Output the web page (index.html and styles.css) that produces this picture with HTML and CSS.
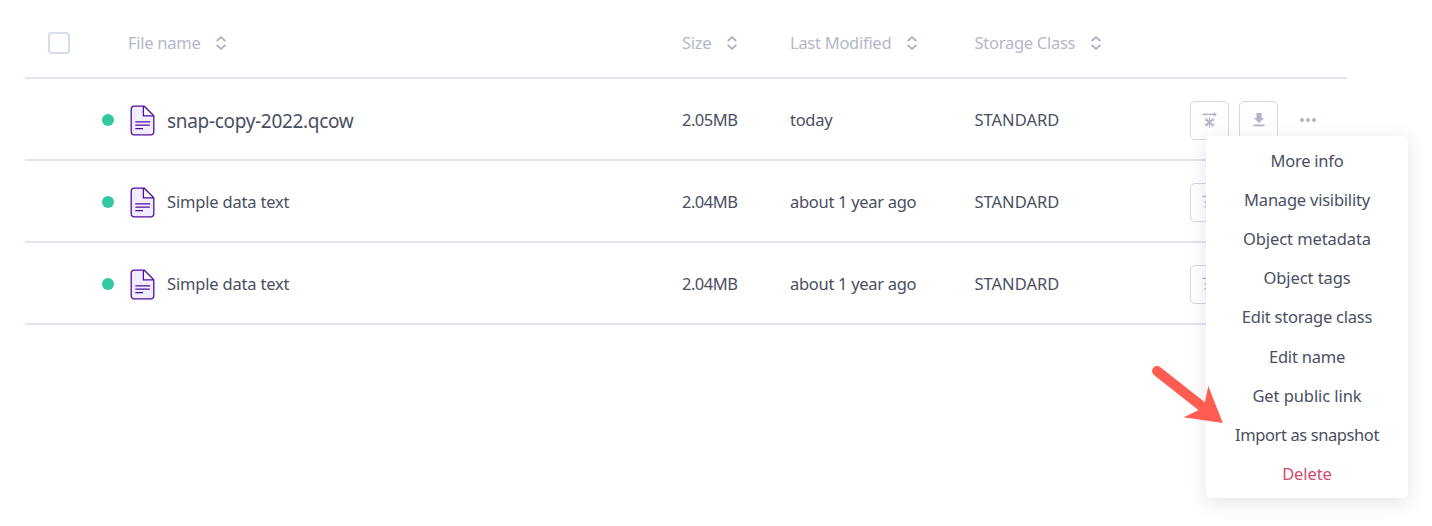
FILE: index.html
```html
<!DOCTYPE html>
<html lang="en">
<head>
<meta charset="utf-8">
<title>Objects</title>
<link rel="stylesheet" href="styles.css">
</head>
<body>
<svg class="defs" width="0" height="0" aria-hidden="true">
  <symbol id="sort" viewBox="0 0 12 14"><path d="M1.7 5 6 1.2 10.3 5M1.7 9 6 12.8 10.3 9" fill="none" stroke="currentColor" stroke-width="1.7"/></symbol>
  <symbol id="file" viewBox="0 0 25 31"><path d="M4 1.2H14.3L23.8 10.8V27a2.8 2.8 0 0 1-2.8 2.8H4A2.8 2.8 0 0 1 1.2 27V4A2.8 2.8 0 0 1 4 1.2Z" fill="#efedff"/><path d="M14 1.5V10.5H23.5Z" fill="#fff"/><path d="M4 1.2H14.3L23.8 10.8V27a2.8 2.8 0 0 1-2.8 2.8H4A2.8 2.8 0 0 1 1.2 27V4A2.8 2.8 0 0 1 4 1.2ZM13.4 1.2V10.8H23.8M5.3 16.9H20.2M5.3 20.1H19.8M5.3 23.6H13" fill="none" stroke="#4f0f9e" stroke-width="1.3"/></symbol>
  <symbol id="snapshot" viewBox="0 0 16 16"><path d="M.5 2.4H13" stroke="currentColor" stroke-width="1.5"/><path d="M7.5 5V15.8M2.4 7.6 12.6 13.2M2.4 13.2 12.6 7.6M4 6.2 7.5 10.4 11 6.2M4 14.6 7.5 10.4 11 14.6" fill="none" stroke="currentColor" stroke-width="1.1"/><path d="M11.8 0 15 2.4 11.8 4.8Z" fill="currentColor"/></symbol>
  <symbol id="download" viewBox="0 0 12 14"><path d="M3.5 0H8.5V5H11.3L6 10 .7 5H3.5ZM.5 11.6H11.5V13.2H.5Z" fill="currentColor"/></symbol>
</svg>
<main class="table">
  <div class="row head">
    <span class="checkbox"></span>
    <div class="sortable"><span>File name</span><svg class="sort"><use href="#sort"/></svg></div>
    <div class="sortable"><span>Size</span><svg class="sort"><use href="#sort"/></svg></div>
    <div class="sortable"><span>Last Modified</span><svg class="sort"><use href="#sort"/></svg></div>
    <div class="sortable"><span>Storage Class</span><svg class="sort"><use href="#sort"/></svg></div>
  </div>
  <div class="row">
    <span></span>
    <div class="object"><i class="status"></i><svg class="file"><use href="#file"/></svg><span class="name large">snap-copy-2022.qcow</span></div>
    <span class="size">2.05MB</span><span class="date">today</span><span class="standard">STANDARD</span>
    <div class="actions"><span class="button"><svg class="snapshot"><use href="#snapshot"/></svg></span><span class="button"><svg class="download"><use href="#download"/></svg></span><span class="more"><i></i><i></i><i></i></span></div>
  </div>
  <div class="row">
    <span></span>
    <div class="object"><i class="status"></i><svg class="file"><use href="#file"/></svg><span class="name">Simple data text</span></div>
    <span class="size">2.04MB</span><span class="date">about 1 year ago</span><span class="standard">STANDARD</span>
    <div class="actions"><span class="button"><svg class="snapshot"><use href="#snapshot"/></svg></span></div>
  </div>
  <div class="row">
    <span></span>
    <div class="object"><i class="status"></i><svg class="file"><use href="#file"/></svg><span class="name">Simple data text</span></div>
    <span class="size">2.04MB</span><span class="date">about 1 year ago</span><span class="standard">STANDARD</span>
    <div class="actions"><span class="button"><svg class="snapshot"><use href="#snapshot"/></svg></span></div>
  </div>
</main>
<nav class="menu">
  <span>More info</span>
  <span>Manage visibility</span>
  <span class="wide">Object metadata</span>
  <span class="wide">Object tags</span>
  <span>Edit storage class</span>
  <span>Edit name</span>
  <span class="wide">Get public link</span>
  <span class="tight">Import as snapshot</span>
  <span class="wide danger">Delete</span>
</nav>
<svg class="arrow" viewBox="0 0 76 64"><path d="M7 8 54 45" stroke="#ff5d52" stroke-width="10" stroke-linecap="round" fill="none"/><path d="M72.8 60 58.3 23 55 39 49 47 33.5 54.3Z" fill="#ff5d52"/></svg>
</body>
</html>
```
FILE: styles.css
```css
* { box-sizing: border-box; }
body {
  margin: 0;
  height: 526px;
  overflow: hidden;
  position: relative;
  background: #fff;
  color: #4a4f62;
  font: 16.5px/24px "Noto Sans", sans-serif;
  letter-spacing: -0.5px;
  white-space: nowrap;
}
.defs { position: absolute; }
.table { width: 1322px; margin-left: 25px; padding-top: 9px; }
.row {
  display: grid;
  grid-template-columns: 77px 580px 108px 184.5px 215.5px 1fr;
  align-items: center;
  height: 82px;
  padding-top: 2px;
  border-bottom: 2px solid #e2e4f1;
}
.row.head { grid-template-columns: 103px 554px 108px 184.5px 1fr; height: 70px; padding-top: 0; color: #b4b7c9; letter-spacing: -0.27px; }
.checkbox { width: 22px; height: 22px; margin-left: 23px; border: 2px solid #d5dce9; border-radius: 4px; }
.sortable { display: flex; align-items: center; gap: 15px; }
.sort { width: 12px; height: 14px; color: #abafc2; }
.object { display: flex; align-items: center; }
.status { width: 12px; height: 12px; border-radius: 50%; background: #32c8a1; margin-right: 16px; }
.file { width: 25px; height: 31px; margin-right: 12px; }
.name { letter-spacing: -0.18px; }
.name.large { font-size: 19px; letter-spacing: -0.32px; padding-top: 1px; }
.date { letter-spacing: -0.3px; }
.standard { letter-spacing: 0; }
.actions { display: flex; align-items: center; gap: 10px; }
.button { display: grid; place-items: center; width: 39px; height: 39px; border: 1px solid #d3d8e8; border-radius: 5px; color: #b0b4c6; }
.snapshot { width: 16px; height: 16px; }
.download { width: 12px; height: 14px; }
.more { display: flex; gap: 2px; margin-left: 11.5px; }
.more i { width: 4px; height: 4px; border-radius: 50%; background: #b0b4c6; }
.menu {
  position: absolute;
  left: 1206px;
  top: 136px;
  width: 202px;
  height: 362px;
  padding-top: 5px;
  display: grid;
  grid-auto-rows: 39.2px;
  align-items: center;
  justify-items: center;
  border-radius: 5px;
  background: #fff;
  box-shadow: 0 4px 18px rgba(74, 85, 120, .16);
  letter-spacing: -0.22px;
}
.wide { letter-spacing: -0.08px; }
.tight { letter-spacing: -0.4px; }
.danger { color: #d14c6d; }
.arrow { position: absolute; left: 1150px; top: 363px; width: 76px; height: 64px; }
```
